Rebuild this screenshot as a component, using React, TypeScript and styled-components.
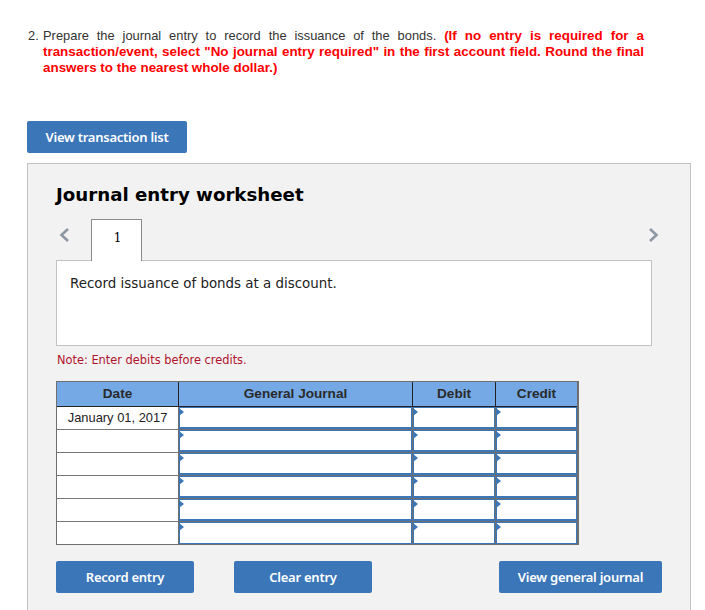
import React from "react";
import styled, { createGlobalStyle } from "styled-components";

const Global = createGlobalStyle`
  html, body { margin: 0; padding: 0; background: #fff; }
  body { font-family: "Liberation Sans", Arial, sans-serif; overflow: hidden; }
`;

const Page = styled.div`
  width: 705px;
  height: 610px;
  overflow: hidden;
  padding: 28px 14px 0 27px;
  box-sizing: border-box;
`;

const Question = styled.div`
  display: flex;
  width: 617px;
  font-size: 12.9px;
  line-height: 16px;
  color: #333;
`;

const Num = styled.span`
  width: 16px;
  padding-left: 1px;
  flex: none;
  box-sizing: border-box;
`;

const QuestionText = styled.p`
  margin: 0;
  flex: 1;
  text-align: justify;
`;

const Red = styled.strong`
  color: #f00;
  font-size: 13.4px;
  font-weight: 700;
`;

const Button = styled.button<{ $w: number }>`
  width: ${(p) => p.$w}px;
  height: 32px;
  padding: 0;
  border: 0;
  border-radius: 2px;
  background: #3b76b9;
  color: #fff;
  font-family: "Noto Sans", sans-serif;
  font-size: 13px;
  font-weight: 600;
  letter-spacing: -0.25px;
  flex: none;
`;

const TopAction = styled.div`
  margin-top: 45px;
  display: flex;
`;

const Panel = styled.section`
  margin-top: 10px;
  width: 664px;
  height: 460px;
  box-sizing: border-box;
  background: #f2f2f2;
  border: 1px solid #c2c2c2;
  padding: 18px 28px 0 28px;
`;

const Title = styled.h2`
  margin: 0;
  font-family: "DejaVu Sans", sans-serif;
  font-size: 18.2px;
  line-height: 26px;
  font-weight: 700;
  color: #000;
`;

const TabBar = styled.div`
  margin-top: 11px;
  height: 42px;
  display: flex;
  align-items: flex-start;
  position: relative;
  z-index: 1;
`;

const Arrow = styled.svg`
  width: 12px;
  height: 16px;
  flex: none;
  display: block;
`;

const Tab = styled.div`
  width: 51px;
  height: 42px;
  box-sizing: border-box;
  margin-left: 21px;
  margin-right: auto;
  padding: 0 0 6px 2px;
  background: #fff;
  border: 1px solid #8a8a8a;
  border-bottom: 0;
  display: flex;
  align-items: center;
  justify-content: center;
  font-family: "DejaVu Serif", serif;
  font-size: 12px;
  color: #000;
`;

const NextWrap = styled.div`
  margin: 8px 2px 0 0;
  display: flex;
`;

const PrevWrap = styled.div`
  margin: 8px 0 0 2px;
  display: flex;
`;

const Description = styled.div`
  margin-top: -1px;
  width: 596px;
  height: 86px;
  box-sizing: border-box;
  background: #fff;
  border: 1px solid #c2c2c2;
  padding: 14px 13px;
  font-family: "DejaVu Sans", sans-serif;
  font-size: 13.4px;
  line-height: 17px;
  color: #222;
`;

const Note = styled.p`
  margin: 7px 0 0;
  padding-left: 1px;
  font-family: "DejaVu Sans", sans-serif;
  font-size: 11.4px;
  line-height: 14px;
  color: #b0122b;
`;

const Table = styled.table`
  margin-top: 14px;
  width: 523px;
  table-layout: fixed;
  border-collapse: separate;
  border-spacing: 0;
  border: 1px solid #6f6f6f;
  border-right-width: 2px;
  box-sizing: border-box;
  background: #fff;
`;

const Head = styled.th<{ $w: number }>`
  width: ${(p) => p.$w}px;
  height: 25px;
  padding: 0 0 1px;
  background: #74a9e6;
  border-bottom: 1px solid #222;
  border-left: 1px solid #222;
  font-size: 13.6px;
  font-weight: 700;
  color: #2a2a2a;
  box-sizing: border-box;
  &:first-child { border-left: 0; }
`;

const DateCell = styled.td<{ $last?: boolean }>`
  height: ${(p) => (p.$last ? 22 : 23)}px;
  padding: 0 0 2px;
  box-sizing: border-box;
  background: #fff;
  border-bottom: ${(p) => (p.$last ? "0" : "1px solid #777")};
  font-size: 12.9px;
  text-align: center;
  color: #222;
`;

const EntryCell = styled.td`
  padding: 0;
  box-sizing: border-box;
  background: #6f6f6f;
  vertical-align: top;
  border-left: 1px solid #6f6f6f;
`;

const Entry = styled.div<{ $last?: boolean }>`
  position: relative;
  height: 22px;
  box-sizing: border-box;
  background: #fff;
  border: 1px solid #3b76b9;
  border-bottom-width: ${(p) => (p.$last ? 1 : 2)}px;
  &::before {
    content: "";
    position: absolute;
    left: -1px;
    top: 0;
    border-left: 5px solid #3b76b9;
    border-top: 4px solid transparent;
    border-bottom: 4px solid transparent;
  }
`;

const Actions = styled.div`
  margin-top: 16px;
  width: 606px;
  display: flex;
`;

const Gap = styled.div<{ $w: number }>`
  width: ${(p) => p.$w}px;
  flex: none;
`;

const Chevron = ({ d }: { d: string }) => (
  <Arrow viewBox="0 0 12 16" aria-hidden="true">
    <path d={d} fill="none" stroke="#8d96a3" strokeWidth="2.6" />
  </Arrow>
);

const rows = ["January 01, 2017", "", "", "", "", ""];

export default function App() {
  return (
    <Page>
      <Global />
      <Question>
        <Num>2.</Num>
        <QuestionText>
          Prepare the journal entry to record the issuance of the bonds.{" "}
          <Red>
            (If no entry is required for a transaction/event, select "No journal entry required" in the first
            account field. Round the final answers to the nearest whole dollar.)
          </Red>
        </QuestionText>
      </Question>
      <TopAction>
        <Button $w={160}>View transaction list</Button>
      </TopAction>
      <Panel>
        <Title>Journal entry worksheet</Title>
        <TabBar>
          <PrevWrap>
            <Chevron d="M10 2 L3.5 8 L10 14" />
          </PrevWrap>
          <Tab>1</Tab>
          <NextWrap>
            <Chevron d="M2 2 L8.5 8 L2 14" />
          </NextWrap>
        </TabBar>
        <Description>Record issuance of bonds at a discount.</Description>
        <Note>Note: Enter debits before credits.</Note>
        <Table>
          <thead>
            <tr>
              <Head $w={121}>Date</Head>
              <Head $w={234}>General Journal</Head>
              <Head $w={83}>Debit</Head>
              <Head $w={82}>Credit</Head>
            </tr>
          </thead>
          <tbody>
            {rows.map((date, i) => {
              const last = i === rows.length - 1;
              return (
                <tr key={i}>
                  <DateCell $last={last}>{date}</DateCell>
                  {[0, 1, 2].map((c) => (
                    <EntryCell key={c}>
                      <Entry $last={last} />
                    </EntryCell>
                  ))}
                </tr>
              );
            })}
          </tbody>
        </Table>
        <Actions>
          <Button $w={138}>Record entry</Button>
          <Gap $w={40} />
          <Button $w={138}>Clear entry</Button>
          <Gap $w={127} />
          <Button $w={163}>View general journal</Button>
        </Actions>
      </Panel>
    </Page>
  );
}
